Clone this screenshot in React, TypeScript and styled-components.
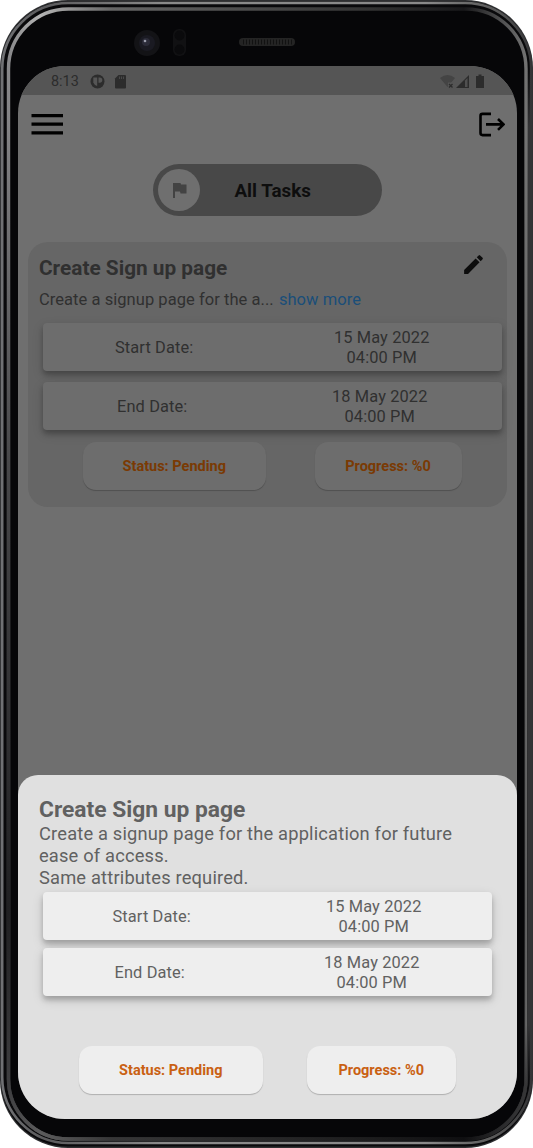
import React from 'react';
import styled, { createGlobalStyle } from 'styled-components';

const Global = createGlobalStyle`
  * { box-sizing: border-box; }
  html, body { margin: 0; padding: 0; background: #fff; }
  body { font-family: Roboto, sans-serif; color: #616161; overflow: hidden; }
`;

const Phone = styled.div`
  position: relative;
  width: 533px;
  height: 1148px;
  padding: 66px 16px 30px 18px;
`;

const Bezel = styled.svg`
  position: absolute;
  inset: 0;
`;

const Screen = styled.div`
  position: relative;
  display: flex;
  flex-direction: column;
  width: 499px;
  height: 1053px;
  border-radius: 47px;
  overflow: hidden;
  background: #6f6f6f;
`;

const StatusBar = styled.div`
  display: flex;
  align-items: center;
  height: 29px;
  padding: 2px 31px 0 33px;
  background: #555;
  color: #2c2c2c;
  font-size: 14.4px;
`;

const StatusIcons = styled.svg<{ $push?: boolean }>`
  display: block;
  margin-left: ${(p) => (p.$push ? 'auto' : '11px')};
`;

const AppBar = styled.div`
  display: flex;
  justify-content: space-between;
  height: 69px;
  padding: 16px 12px 0 13px;
`;

const Filter = styled.div`
  display: flex;
  align-items: center;
  align-self: center;
  width: 229px;
  height: 52px;
  padding: 0 5px;
  border-radius: 26px;
  background: #484848;
`;

const FilterKnob = styled.div`
  display: flex;
  align-items: center;
  justify-content: center;
  width: 42px;
  height: 42px;
  border-radius: 50%;
  background: #6f6f6f;
`;

const FilterLabel = styled.span`
  margin-left: 34.5px;
  padding-top: 1px;
  color: #0e0e0e;
  font-weight: 700;
  font-size: 18.8px;
`;

const Card = styled.div`
  height: 265px;
  margin: 26px 10px 0;
  padding: 13px 5px 0 11px;
  border-radius: 20px;
  background: #666;
  color: #303030;
`;

const CardHead = styled.div`
  display: flex;
  justify-content: space-between;
  height: 31px;
  padding-right: 16px;
`;

const CardTitle = styled.h2`
  margin: 0;
  font-size: 20.8px;
  line-height: 27px;
  font-weight: 700;
`;

const EditIcon = styled.svg`
  margin-top: -3px;
`;

const Summary = styled.p`
  margin: 0;
  height: 37px;
  font-size: 16.5px;
  letter-spacing: 0.05px;
  line-height: 28px;
`;

const More = styled.span`
  margin-left: 1px;
  color: #1a4e79;
`;

const DateRow = styled.div<{ $sheet?: boolean; $shift: number }>`
  display: flex;
  align-items: center;
  height: ${(p) => (p.$sheet ? 47.5 : 47.7)}px;
  margin: 0 ${(p) => (p.$sheet ? 4 : 0)}px ${(p) => (p.$sheet ? 8.5 : 11.6)}px 4px;
  padding: ${(p) => (p.$sheet ? 1 : 1.6)}px 0 0 ${(p) => p.$shift}px;
  border-radius: 4px;
  background: ${(p) => (p.$sheet ? '#eee' : '#6d6d6d')};
  box-shadow: 0 4px 5px rgba(0, 0, 0, ${(p) => (p.$sheet ? 0.2 : 0.22)}),
    0 4px 12px rgba(0, 0, 0, 0.14);
  font-size: 16.4px;
  letter-spacing: 0.12px;
  line-height: 20px;
`;

const DateLabel = styled.span`
  flex: none;
`;

const DateValue = styled.span`
  flex: none;
  text-align: center;
`;

const Chips = styled.div<{ $sheet?: boolean }>`
  display: flex;
  gap: ${(p) => (p.$sheet ? 44.5 : 49)}px;
  padding: ${(p) => (p.$sheet ? '42px 0 0 40px' : '0 0 0 44px')};
`;

const Chip = styled.div<{ $sheet?: boolean; $width: number }>`
  display: flex;
  align-items: center;
  justify-content: center;
  width: ${(p) => p.$width}px;
  height: 48px;
  padding-top: 1px;
  border-radius: 13px;
  background: ${(p) => (p.$sheet ? '#eee' : '#6d6d6d')};
  box-shadow: 0 1px 1px rgba(0, 0, 0, 0.22);
  color: ${(p) => (p.$sheet ? '#c96012' : '#7a3a04')};
  font-size: 14.5px;
  font-weight: 700;
`;

const Sheet = styled.div`
  height: 344px;
  margin-top: auto;
  padding: 21px 21px 0;
  border-radius: 20px 20px 0 0;
  background: #e0e0e0;
  color: #616161;
`;

const SheetTitle = styled.h1`
  margin: 0;
  font-size: 22.8px;
  line-height: 27px;
  font-weight: 700;
`;

const SheetText = styled.p`
  margin: 0 0 3.4px;
  font-size: 18.3px;
  letter-spacing: 0.18px;
  line-height: 22px;
  white-space: nowrap;
`;

type DateProps = { label: string; day: string; sheet?: boolean; start: number; gap: number };

function DateLine({ label, day, sheet, start, gap }: DateProps) {
  return (
    <DateRow $sheet={sheet} $shift={start}>
      <DateLabel>{label}</DateLabel>
      <DateValue style={{ marginLeft: gap }}>
        {day}
        <br />
        04:00 PM
      </DateValue>
    </DateRow>
  );
}

function PhoneBody() {
  return (
    <Bezel width="533" height="1148" viewBox="0 0 533 1148">
      <defs>
        <linearGradient id="inner" x1="0" y1="0" x2="1" y2="0">
          <stop offset="0" stopColor="#8a8a8c" />
          <stop offset="0.06" stopColor="#b4b4b4" />
          <stop offset="0.2" stopColor="#666" />
          <stop offset="0.7" stopColor="#333" />
          <stop offset="0.88" stopColor="#18181a" />
          <stop offset="1" stopColor="#747474" />
        </linearGradient>
        <linearGradient id="innerFade" x1="0" y1="0" x2="0" y2="1">
          <stop offset="0" stopColor="#060608" stopOpacity="0" />
          <stop offset="0.1" stopColor="#060608" stopOpacity="0.05" />
          <stop offset="0.4" stopColor="#060608" stopOpacity="0.5" />
          <stop offset="0.8" stopColor="#060608" stopOpacity="0.8" />
          <stop offset="1" stopColor="#060608" stopOpacity="0.5" />
        </linearGradient>
        <linearGradient id="outer" x1="0" y1="0" x2="1" y2="0">
          <stop offset="0" stopColor="#707174" />
          <stop offset="0.08" stopColor="#5a5a5c" />
          <stop offset="0.3" stopColor="#8a8a8a" />
          <stop offset="0.8" stopColor="#8a8a8a" />
          <stop offset="0.94" stopColor="#555" />
          <stop offset="1" stopColor="#353537" />
        </linearGradient>
        <linearGradient id="edge" x1="0" y1="0" x2="0" y2="1">
          <stop offset="0" stopColor="#747474" stopOpacity="0" />
          <stop offset="0.06" stopColor="#747474" />
          <stop offset="0.94" stopColor="#747474" />
          <stop offset="1" stopColor="#747474" stopOpacity="0" />
        </linearGradient>
        <linearGradient id="side" x1="0" y1="0" x2="0" y2="1">
          <stop offset="0" stopColor="#343436" stopOpacity="0" />
          <stop offset="0.06" stopColor="#343436" />
          <stop offset="0.94" stopColor="#343436" />
          <stop offset="1" stopColor="#343436" stopOpacity="0" />
        </linearGradient>
      </defs>
      <rect width="533" height="1148" rx="68" fill="#2e2f31" />
      <rect x="1" y="1.500" width="531" height="1145" rx="67" fill="#09090b" />
      <rect x="2.200" y="3" width="529" height="1140" rx="66" fill="none" stroke="url(#outer)" strokeWidth="2.600" />
      <rect x="527" y="66" width="5" height="1020" fill="url(#side)" />
      <rect x="8.500" y="9" width="517.500" height="1130" rx="60" fill="#060608" stroke="url(#inner)" strokeWidth="3.400" />
      <rect x="8.500" y="9" width="517.500" height="1130" rx="60" fill="none" stroke="url(#innerFade)" strokeWidth="3.600" />
      <rect x="525.300" y="66" width="1.500" height="1020" fill="url(#edge)" />
      <circle cx="147" cy="43" r="13" fill="#131316" />
      <circle cx="147" cy="43" r="8" fill="#1a1a22" />
      <circle cx="146" cy="42" r="4" fill="#2b2b38" />
      <circle cx="145" cy="41" r="1.300" fill="#9a9cab" />
      <rect x="173" y="29" width="13" height="27" rx="6" fill="#111113" />
      <circle cx="179.500" cy="35.500" r="5" fill="#0a0a0c" />
      <circle cx="179.500" cy="49.500" r="5" fill="#0a0a0c" />
      <rect x="239" y="38" width="56" height="8" rx="4" fill="#242424" />
      <path d="M243 42h49" stroke="#121212" strokeWidth="5" strokeDasharray="1 2" />
    </Bezel>
  );
}

export default function App() {
  return (
    <>
      <Global />
      <Phone>
        <PhoneBody />
        <Screen>
          <StatusBar>
            8:13
            <StatusIcons width="38" height="16" viewBox="0 0 38 16">
              <circle cx="7.500" cy="7.500" r="7" fill="#2c2c2c" />
              <path d="M3.300 3.500h3.900v8.500A5.500 5.500 0 0 1 3.300 8.500z" fill="#555" />
              <path d="M8.500 3.500h1.200a2.600 2.600 0 0 1 0 5.200H8.500z" fill="#555" />
              <path d="M28.500 1H35a1 1 0 0 1 1 1v11.500a1 1 0 0 1-1 1h-9a1 1 0 0 1-1-1V4.500z" fill="#2c2c2c" />
              <path d="M29.500 2.500V5M31.500 2.500V5M33.500 2.500V5" stroke="#484848" />
            </StatusIcons>
            <StatusIcons $push width="46" height="16" viewBox="0 0 46 16">
              <path d="M0 4Q7.500-2 15 4L7.500 13z" fill="#444" />
              <path d="M8 8.500h6v6H8z" fill="#555" />
              <path d="M9 10l3.500 3.500M12.500 10l-3.500 3.500" stroke="#2c2c2c" strokeWidth="1.300" />
              <path d="M16 14L29 1v13z" fill="#2c2c2c" />
              <path d="M25 6.500l2.500-2.500v9H25z" fill="#505050" />
              <path d="M38.500.500h3V2H44v12h-8V2h2.500z" fill="#2c2c2c" />
            </StatusIcons>
          </StatusBar>
          <AppBar>
            <svg width="34" height="28" viewBox="0 0 34 28">
              <path d="M.5 4.600h31.500M.5 13.200h31.500M.5 21.900h31.500" stroke="#000" strokeWidth="3.200" />
            </svg>
            <svg width="32" height="28" viewBox="0 0 32 28">
              <path d="M18 2.900H9.500Q7.500 2.900 7.500 4.900v17.200q0 2 2 2H18M13 13.400h17M25 8l5.500 5.400L25 18.900" fill="none" stroke="#000" strokeWidth="2.600" />
            </svg>
          </AppBar>
          <Filter>
            <FilterKnob>
              <svg width="20" height="20" viewBox="0 0 20 20">
                <path d="M4 3h7.500l.5 1.500h5.500v9h-6l-.5-2H6V18H4z" fill="#434343" />
              </svg>
            </FilterKnob>
            <FilterLabel>All Tasks</FilterLabel>
          </Filter>
          <Card>
            <CardHead>
              <CardTitle>Create Sign up page</CardTitle>
              <EditIcon width="25" height="25" viewBox="0 0 24 24">
                <path d="M3 17.250V21h3.750L17.810 9.940l-3.750-3.750L3 17.250zM20.710 7.040a1 1 0 0 0 0-1.410l-2.340-2.340a1 1 0 0 0-1.410 0l-1.830 1.830 3.750 3.750 1.830-1.830z" fill="#0d0d0d" />
              </EditIcon>
            </CardHead>
            <Summary>
              Create a signup page for the a... <More>show more</More>
            </Summary>
            <DateLine label="Start Date:" day="15 May 2022" start={72} gap={140.5} />
            <DateLine label="End Date:" day="18 May 2022" start={74} gap={144.5} />
            <Chips>
              <Chip $width={182.5}>Status: Pending</Chip>
              <Chip $width={147}>Progress: %0</Chip>
            </Chips>
          </Card>
          <Sheet>
            <SheetTitle>Create Sign up page</SheetTitle>
            <SheetText>
              Create a signup page for the application for future
              <br />
              ease of access.
              <br />
              Same attributes required.
            </SheetText>
            <DateLine sheet label="Start Date:" day="15 May 2022" start={69.5} gap={135} />
            <DateLine sheet label="End Date:" day="18 May 2022" start={71.5} gap={139} />
            <Chips $sheet>
              <Chip $sheet $width={183.5}>Status: Pending</Chip>
              <Chip $sheet $width={148.5}>Progress: %0</Chip>
            </Chips>
          </Sheet>
        </Screen>
      </Phone>
    </>
  );
}
